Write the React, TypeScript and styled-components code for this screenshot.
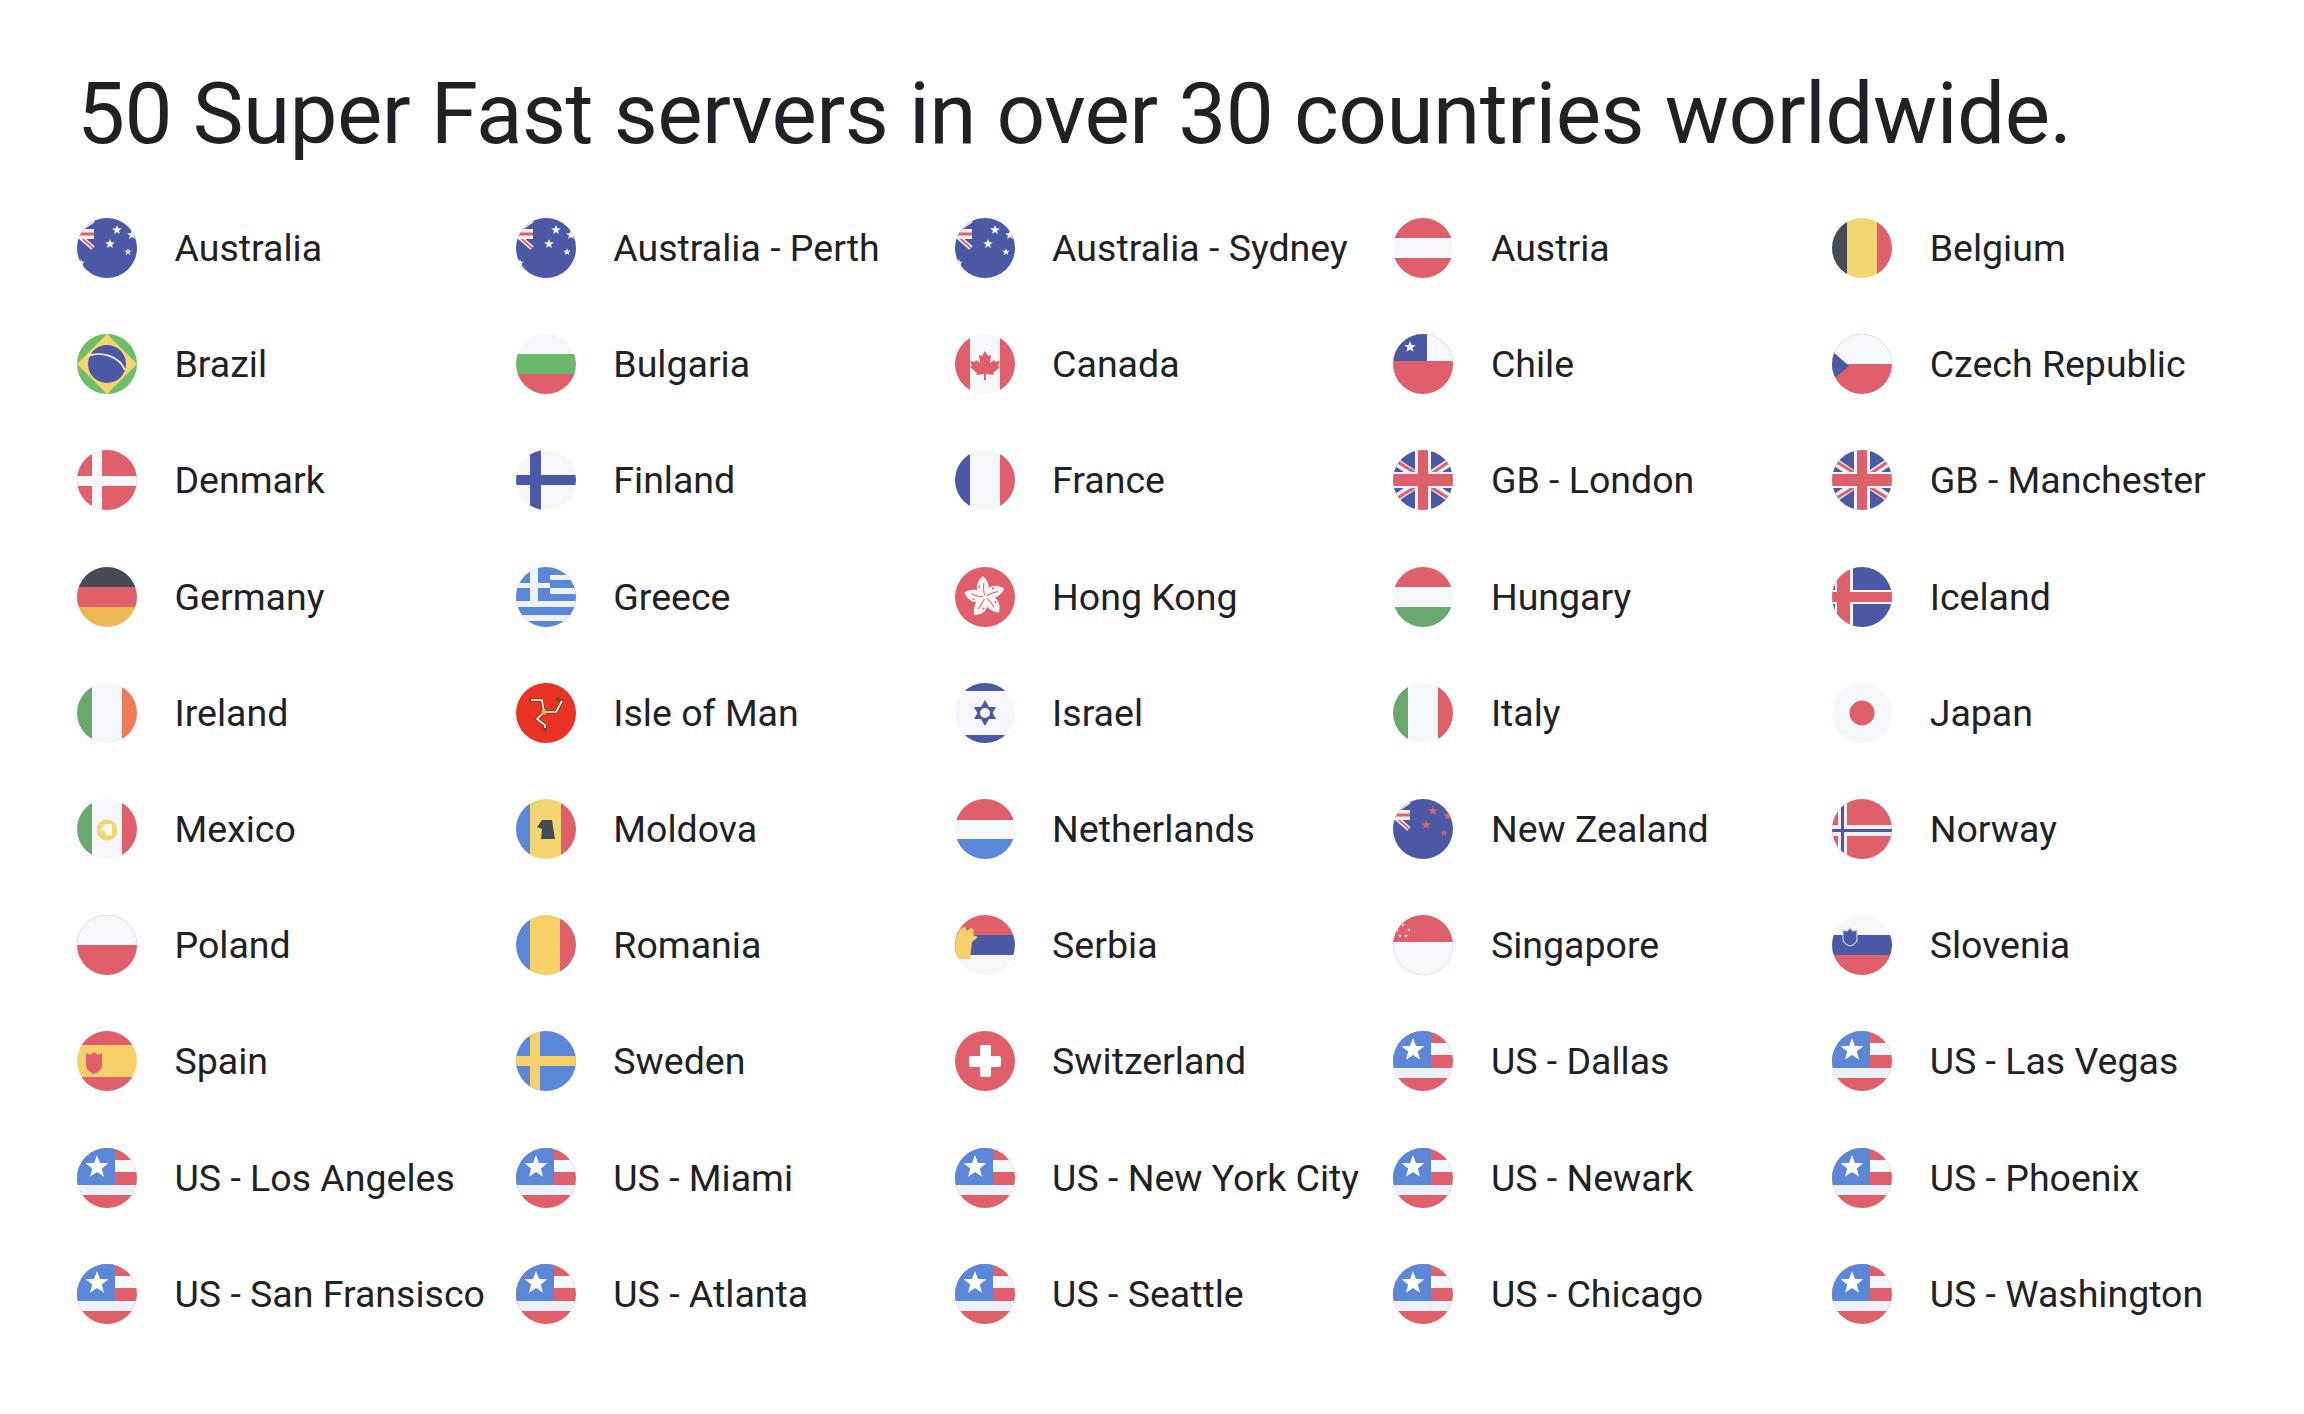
import type { ReactNode } from 'react';
import styled, { createGlobalStyle } from 'styled-components';

const RED = '#df5f6a';
const NAVY = '#4a58a6';
const LIGHT = '#f5f7fb';
const GREEN = '#6ba86f';
const YELLOW = '#f3d671';
const AMBER = '#f7d06a';
const DARK = '#464c55';
const SKY = '#5a87d8';

const GlobalStyle = createGlobalStyle`
  html, body {
    margin: 0;
    background: #fff;
  }
  body {
    font-family: Roboto, "Liberation Sans", sans-serif;
    color: #1f2124;
  }
`;

const Page = styled.main`
  width: 2304px;
  height: 1414px;
  box-sizing: border-box;
  padding: 64px 0 0 77px;
  overflow: hidden;
`;

const Title = styled.h1`
  margin: 0 0 26px;
  font-size: 85.5px;
  line-height: 100px;
  font-weight: 400;
  letter-spacing: -0.55px;
  white-space: nowrap;
`;

const ServerGrid = styled.ul`
  display: grid;
  grid-template-columns: repeat(5, 438.8px);
  grid-auto-rows: 116.2px;
  margin: 0;
  padding: 0;
  list-style: none;
`;

const ServerItem = styled.li`
  display: flex;
  align-items: center;
  gap: 37.5px;
  white-space: nowrap;
`;

const FlagIcon = styled.svg`
  flex: none;
  width: 60px;
  height: 60px;
  border-radius: 50%;
`;

const ServerName = styled.span`
  font-size: 37.5px;
  line-height: 44px;
`;

const starPoints = (cx: number, cy: number, r: number) =>
  Array.from({ length: 10 }, (_, i) => {
    const radius = i % 2 ? r * 0.42 : r;
    const angle = (Math.PI / 5) * i - Math.PI / 2;
    return `${cx + radius * Math.cos(angle)},${cy + radius * Math.sin(angle)}`;
  }).join(' ');

const Star = ({ x, y, r, fill = '#fff' }: { x: number; y: number; r: number; fill?: string }) => (
  <polygon points={starPoints(x, y, r)} fill={fill} />
);

const hBands = (a: string, b: string, c: string, y1 = 20, y2 = 40) => (
  <>
    <rect width="60" height={y1} fill={a} />
    <rect y={y1} width="60" height={y2 - y1} fill={b} />
    <rect y={y2} width="60" height={60 - y2} fill={c} />
  </>
);

const vBands = (a: string, b: string, c: string, x1 = 15, x2 = 45) => (
  <>
    <rect width={x1} height="60" fill={a} />
    <rect x={x1} width={x2 - x1} height="60" fill={b} />
    <rect x={x2} width={60 - x2} height="60" fill={c} />
  </>
);

const cross = (fill: string, x: number, w: number, y: number, h: number) => (
  <>
    <rect x={x} width={w} height="60" fill={fill} />
    <rect y={y} width="60" height={h} fill={fill} />
  </>
);

const southern = (star: string) => (
  <>
    <rect width="60" height="60" fill={NAVY} />
    <path d="M-1 15L17 3" stroke="#f0e6ea" strokeWidth="3" />
    <path d="M-1 15L16 30" stroke="#f3eef2" strokeWidth="5" />
    <path d="M-1 15L16 30" stroke={RED} strokeWidth="1.8" />
    <rect y="11" width="17" height="10" fill="#f3eef2" />
    <rect y="14.5" width="17" height="3" fill={RED} />
    <Star x={40} y={12} r={5} fill={star} />
    <Star x={55} y={17} r={5} fill={star} />
    <Star x={33} y={26} r={5} fill={star} />
    <Star x={51} y={34} r={3.8} fill={star} />
  </>
);

const australia = (
  <>
    {southern('#fff')}
    <Star x={4} y={45} r={4} fill="#fff" />
  </>
);

const unionJack = (
  <>
    <rect width="60" height="60" fill={NAVY} />
    <path d="M0 10L60 50M60 10L0 50" stroke="#eef0f6" strokeWidth="8" />
    <path d="M3 11L24 24M57 11L38 24M3 49L24 36M57 49L36 36" stroke={RED} strokeWidth="3" />
    {cross('#f5f7fb', 22, 16, 22, 16)}
    {cross(RED, 25, 10, 24, 12)}
  </>
);

const usa = (
  <>
    <rect width="60" height="60" fill={RED} />
    <rect y="12" width="60" height="12" fill={LIGHT} />
    <rect y="37" width="60" height="10" fill="#edf2fa" />
    <rect width="38" height="37" fill={SKY} />
    <Star x={20} y={19} r={12} />
  </>
);

const petals = [0, 72, 144, 216, 288];

const flags: Record<string, ReactNode> = {
  australia,
  austria: hBands(RED, LIGHT, RED),
  belgium: vBands(DARK, YELLOW, RED),
  brazil: (
    <>
      <rect width="60" height="60" fill="#6cbf68" />
      <path d="M30 0L60 30L30 60L0 30Z" fill={YELLOW} />
      <circle cx="30" cy="30" r="19" fill={NAVY} />
      <path d="M11 22C25 17 42 22 48 36" stroke="#f5f7fb" strokeWidth="1.6" fill="none" />
    </>
  ),
  bulgaria: hBands(LIGHT, '#6cb86a', RED),
  canada: (
    <>
      {vBands(RED, LIGHT, RED)}
      <path
        d="M30 17L33 22L36 21L35 29L39 26L40 28L45 27L43 32L45 33L38 39L39 41L31 40V46H29V40L21 41L22 39L15 33L17 32L15 27L20 28L21 26L25 29L24 21L27 22Z"
        fill={RED}
      />
    </>
  ),
  chile: (
    <>
      <rect width="60" height="60" fill={RED} />
      <rect width="60" height="27" fill={LIGHT} />
      <rect width="34" height="27" fill={NAVY} />
      <Star x={17} y={13} r={6} />
    </>
  ),
  czech: (
    <>
      <rect width="60" height="60" fill={RED} />
      <rect width="60" height="30" fill={LIGHT} />
      <path d="M0 17L17 32L0 46Z" fill={NAVY} />
    </>
  ),
  denmark: (
    <>
      <rect width="60" height="60" fill={RED} />
      {cross('#fbf7f8', 15, 10, 26, 10)}
    </>
  ),
  finland: (
    <>
      <rect width="60" height="60" fill={LIGHT} />
      {cross(NAVY, 14, 11, 25, 10)}
    </>
  ),
  france: vBands(NAVY, LIGHT, RED),
  germany: hBands(DARK, RED, '#eeb954'),
  greece: (
    <>
      <rect width="60" height="60" fill={SKY} />
      <rect x="34" y="8" width="26" height="5" fill="#edf3fb" />
      <rect x="34" y="21" width="26" height="6" fill="#edf3fb" />
      <rect y="34" width="60" height="6" fill="#edf3fb" />
      <rect y="48" width="60" height="6" fill="#edf3fb" />
      <rect x="14" width="8" height="34" fill="#edf3fb" />
      <rect y="16" width="34" height="5" fill="#edf3fb" />
    </>
  ),
  hongkong: (
    <>
      <rect width="60" height="60" fill={RED} />
      {petals.map((deg) => (
        <g key={deg} transform={`rotate(${deg - 9} 30 30)`}>
          <path d="M30 30C22 27 20 16 31 9C37 15 37 25 30 30Z" fill="#fdf6f7" />
          <path d="M30 28C29 24 30 20 31 16" stroke={RED} strokeWidth="1" fill="none" />
          <circle cx="26" cy="19" r="1" fill={RED} />
        </g>
      ))}
    </>
  ),
  hungary: hBands(RED, LIGHT, GREEN),
  iceland: (
    <>
      <rect width="60" height="60" fill={NAVY} />
      {cross('#f5f7fb', 3, 18, 23, 14)}
      {cross(RED, 5, 13, 25, 10)}
    </>
  ),
  ireland: vBands(GREEN, LIGHT, '#ee7b55'),
  isleofman: (
    <>
      <rect width="60" height="60" fill="#e93323" />
      <path
        d="M28 29L26 17L14 17M28 29L40 29L46 18L41 16M28 29L21 36L29 42L29 47"
        stroke="#6b4a3a"
        strokeWidth="3.6"
        fill="none"
        strokeLinecap="round"
        strokeLinejoin="round"
      />
      <path
        d="M28 29L26 17L15 17M28 29L40 29L46 18M28 29L21 36L29 42L29 45"
        stroke="#f4ecdc"
        strokeWidth="1.7"
        fill="none"
        strokeLinejoin="round"
      />
      <circle cx="28" cy="29" r="2.5" fill="#e3c04a" />
    </>
  ),
  israel: (
    <>
      <rect width="60" height="60" fill={LIGHT} />
      <rect width="60" height="8" fill={NAVY} />
      <rect y="52" width="60" height="8" fill={NAVY} />
      <path d="M30 17L41 36H19Z" fill={NAVY} />
      <path d="M30 43L19 24H41Z" fill={NAVY} />
      <circle cx="30" cy="30" r="5" fill={LIGHT} />
    </>
  ),
  italy: vBands(GREEN, LIGHT, RED),
  japan: (
    <>
      <rect width="60" height="60" fill={LIGHT} />
      <circle cx="30" cy="30" r="12.5" fill={RED} />
    </>
  ),
  mexico: (
    <>
      {vBands(GREEN, LIGHT, RED)}
      <circle cx="30" cy="31" r="10.5" fill={YELLOW} />
      <path d="M28 25H35V36L29 37L28 32H23Z" fill="#fdfaf0" />
    </>
  ),
  moldova: (
    <>
      {vBands(SKY, YELLOW, RED, 14, 45)}
      <path d="M26 21H36L39 40H25L26 30L21 28Z" fill={DARK} />
    </>
  ),
  netherlands: hBands(RED, LIGHT, SKY, 21, 40),
  newzealand: southern(RED),
  norway: (
    <>
      <rect width="60" height="60" fill={RED} />
      {cross('#f6eef0', 6, 9, 26, 11)}
      {cross(NAVY, 9, 3, 30, 3)}
    </>
  ),
  poland: (
    <>
      <rect width="60" height="60" fill={RED} />
      <rect width="60" height="30" fill={LIGHT} />
    </>
  ),
  romania: vBands(SKY, AMBER, RED, 14, 44),
  serbia: (
    <>
      {hBands(RED, NAVY, LIGHT, 20, 40)}
      <path d="M6 13L10 12L12 16L16 13L19 15L18 20L23 22L17 27L15 44H0V24Z" fill={AMBER} />
    </>
  ),
  singapore: (
    <>
      <rect width="60" height="60" fill={RED} />
      <rect y="27" width="60" height="33" fill={LIGHT} />
      <Star x={10} y={10} r={2} fill="#f7e6e8" />
      <Star x={16} y={15} r={2} fill="#f7e6e8" />
      <Star x={13} y={21} r={2} fill="#f7e6e8" />
      <Star x={7} y={21} r={2} fill="#f7e6e8" />
      <Star x={4} y={15} r={2} fill="#f7e6e8" />
    </>
  ),
  slovenia: (
    <>
      {hBands(LIGHT, NAVY, RED, 20, 40)}
      <path
        d="M11 15L15 16L18 13L21 16L25 15V24C25 28 21 30 18 31C15 30 11 28 11 24Z"
        fill={NAVY}
        stroke="#cfd4e8"
        strokeWidth="1.2"
      />
    </>
  ),
  spain: (
    <>
      {hBands(RED, AMBER, RED, 14, 46)}
      <path d="M9 22L13 24L17 21L21 24L25 22V34C25 39 20 42 17 43C14 42 9 39 9 34Z" fill={RED} />
    </>
  ),
  sweden: (
    <>
      <rect width="60" height="60" fill={SKY} />
      {cross(AMBER, 14, 10, 25, 10)}
    </>
  ),
  switzerland: (
    <>
      <rect width="60" height="60" fill={RED} />
      <rect x="25" y="14" width="11" height="32" rx="2" fill="#fff" />
      <rect x="14" y="25" width="32" height="11" rx="2" fill="#fff" />
    </>
  ),
  uk: unionJack,
  usa,
};

const servers: [string, string][] = [
  ['Australia', 'australia'],
  ['Australia - Perth', 'australia'],
  ['Australia - Sydney', 'australia'],
  ['Austria', 'austria'],
  ['Belgium', 'belgium'],
  ['Brazil', 'brazil'],
  ['Bulgaria', 'bulgaria'],
  ['Canada', 'canada'],
  ['Chile', 'chile'],
  ['Czech Republic', 'czech'],
  ['Denmark', 'denmark'],
  ['Finland', 'finland'],
  ['France', 'france'],
  ['GB - London', 'uk'],
  ['GB - Manchester', 'uk'],
  ['Germany', 'germany'],
  ['Greece', 'greece'],
  ['Hong Kong', 'hongkong'],
  ['Hungary', 'hungary'],
  ['Iceland', 'iceland'],
  ['Ireland', 'ireland'],
  ['Isle of Man', 'isleofman'],
  ['Israel', 'israel'],
  ['Italy', 'italy'],
  ['Japan', 'japan'],
  ['Mexico', 'mexico'],
  ['Moldova', 'moldova'],
  ['Netherlands', 'netherlands'],
  ['New Zealand', 'newzealand'],
  ['Norway', 'norway'],
  ['Poland', 'poland'],
  ['Romania', 'romania'],
  ['Serbia', 'serbia'],
  ['Singapore', 'singapore'],
  ['Slovenia', 'slovenia'],
  ['Spain', 'spain'],
  ['Sweden', 'sweden'],
  ['Switzerland', 'switzerland'],
  ['US - Dallas', 'usa'],
  ['US - Las Vegas', 'usa'],
  ['US - Los Angeles', 'usa'],
  ['US - Miami', 'usa'],
  ['US - New York City', 'usa'],
  ['US - Newark', 'usa'],
  ['US - Phoenix', 'usa'],
  ['US - San Fransisco', 'usa'],
  ['US - Atlanta', 'usa'],
  ['US - Seattle', 'usa'],
  ['US - Chicago', 'usa'],
  ['US - Washington', 'usa'],
];

export default function App() {
  return (
    <>
      <GlobalStyle />
      <Page>
        <Title>50 Super Fast servers in over 30 countries worldwide.</Title>
        <ServerGrid>
          {servers.map(([name, flag]) => (
            <ServerItem key={name}>
              <FlagIcon viewBox="0 0 60 60" aria-hidden="true">
                {flags[flag]}
              </FlagIcon>
              <ServerName>{name}</ServerName>
            </ServerItem>
          ))}
        </ServerGrid>
      </Page>
    </>
  );
}
